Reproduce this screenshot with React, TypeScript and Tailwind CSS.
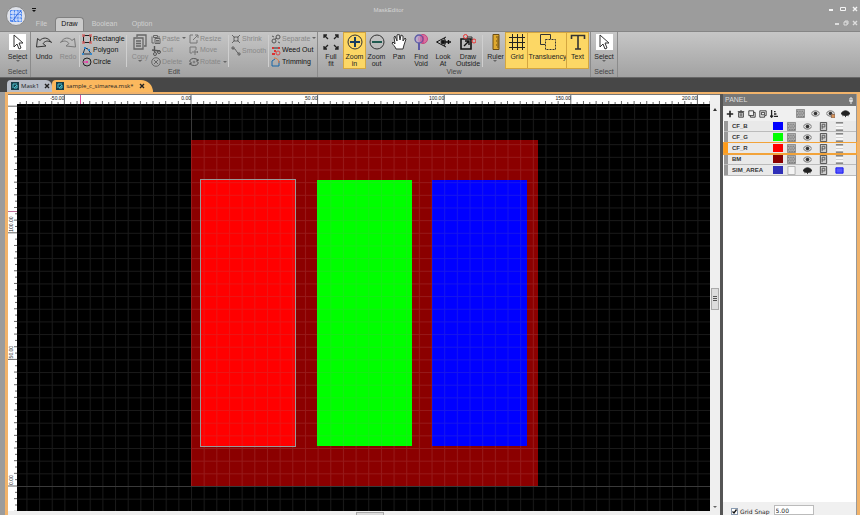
import React from "react";

const STEP = 12.66;

type IconProps = { children: React.ReactNode; box?: string; size?: string };

function Icon({ children, box = "0 0 16 16", size = "size-4" }: IconProps) {
  return (
    <svg viewBox={box} className={`${size} shrink-0`} fill="none" stroke="currentColor" strokeWidth="1" aria-hidden="true">
      {children}
    </svg>
  );
}

const arrowCursor = <path d="M4 1v12l3-3 2 5 2-1-2-5h4z" fill="#fff" stroke="#333" />;

const icons = {
  undo: <path d="M.5 13 1.5 4.5l2.5 2C7 3 12 3 15.5 8.5 12 6 9 7 7 9.5l3 2.5z" stroke="#333" />,
  redo: <path d="M15.5 13 14.5 4.5l-2.5 2C9 3 4 3 .5 8.5 4 6 7 7 9 9.5L6 12z" stroke="#777" />,
  copy: <path d="M5 3V1h9v11h-2M2 4h9v11H2zM4 7h5M4 9.5h5M4 12h5" stroke="#666" strokeWidth="1.3" />,
  rect: (
    <>
      <path d="M1.5 1.5h7v7h-7z" stroke="#222" />
      <path d="M0 0h3v3H0zM7 0h3v3H7zM0 7h3v3H0zM7 7h3v3H7z" fill="#d66" fillOpacity="0.7" stroke="none" />
    </>
  ),
  polygon: (
    <>
      <path d="M1 8 3 2l3 1 3 5z" stroke="#234" />
      <path d="M0 7h2v2H0zM2 1h2v2H2zM6 3h2v2H6zM8 7h2v2H8z" fill="#38c" stroke="none" />
    </>
  ),
  circle: (
    <>
      <circle cx="5" cy="5" r="4" stroke="#222" />
      <path d="M1 5h5" stroke="#e3a" />
      <circle cx="5" cy="5" r="1" fill="#e3a" stroke="none" />
    </>
  ),
  paste: <path d="M2.5 1.5h4v2h-4zM1 2.5v6.5h2M8 2v2M4 4.5h5v5H4zM5 6.5h3M5 8h3" stroke="#666" />,
  cut: (
    <>
      <path d="M3.5 0v6M1 4l8 1" stroke="#555" strokeWidth="1.4" />
      <circle cx="4" cy="8" r="1.5" stroke="#555" />
      <circle cx="8" cy="6" r="1.5" stroke="#555" />
    </>
  ),
  del: (
    <>
      <circle cx="5" cy="5" r="4.3" stroke="#666" />
      <path d="m3 3 4 4M7 3 3 7" stroke="#666" />
    </>
  ),
  resize: <path d="M4 1H1v8h7V6M4 6l5-5M6 1h3v3" stroke="#777" />,
  move: <path d="M1 7V1h6v3M1 7h2M3 6h6M6 4v5M8 5l1 1-1 1" stroke="#777" />,
  rotate: (
    <>
      <path d="M1 5a4 3 0 0 1 8-1M9 5a4 3 0 0 1-8 1M9 2v2H7M1 8V6h2" stroke="#555" />
      <circle cx="5" cy="5" r="1" fill="#555" />
    </>
  ),
  shrink: <path d="m1 1 3 3M2 4h2V2M9 1 6 4M6 2v2h2M1 9l3-3M2 6h2v2M9 9 6 6M8 6H6v2" stroke="#666" />,
  smooth: <path d="m1 2 3 1 2 3 3 3M1 1h2v2H1zM7 7h2v2H7z" stroke="#666" />,
  separate: (
    <>
      <circle cx="3" cy="7" r="2" stroke="#555" />
      <circle cx="7" cy="3" r="2" stroke="#555" />
      <path d="m1 2 2 1M7 8l2 1M4 5l2-1" stroke="#555" />
    </>
  ),
  weed: (
    <>
      <path d="M1 1h2v2H1zM1 7h3v2H1zM7 1h2v2H7zM3 4h2v2H3z" fill="#d33" stroke="none" />
      <circle cx="7" cy="7" r="2" stroke="#d44" />
      <path d="M3 2h4" stroke="#333" />
    </>
  ),
  trim: (
    <>
      <path d="M1 9V4l3-2M1 9h7V4" stroke="#1767a8" />
      <path d="M3 1c3 0 5 2 5 5" stroke="#d74" />
    </>
  ),
  fit: <path d="m1 1 4 4M1 4V1h3M15 1l-4 4M12 1h3v3M1 15l4-4M1 12v3h3M15 15l-4-4M15 12v3h-3" stroke="#222" strokeWidth="1.3" />,
  zoomIn: (
    <>
      <circle cx="8" cy="8" r="7" stroke="#333" />
      <path d="M3 8h10M8 3v10" stroke="#163a5f" strokeWidth="2" />
    </>
  ),
  zoomOut: (
    <>
      <circle cx="8" cy="8" r="7" stroke="#333" />
      <path d="M3 8h10" stroke="#205a50" strokeWidth="2" />
    </>
  ),
  pan: <path d="M5 15c-1-3-3-4-4-6l1-1 2 2-1-7 1-1 2 5V1l2-1 1 6 1-5 2 1v5l2-3 1 1-2 6-1 4z" fill="#fff" stroke="#333" />,
  find: (
    <>
      <circle cx="10" cy="5" r="4.5" fill="#d9709f" stroke="#c4467e" />
      <circle cx="6" cy="5" r="4" fill="#b9a4cf" fillOpacity="0.7" stroke="#5b5aa5" strokeWidth="1.3" />
      <path d="M6 9v7" stroke="#5b5aa5" strokeWidth="2" />
      <path d="M8 2v6M10 2v7" stroke="#c2186b" strokeOpacity="0.6" />
    </>
  ),
  look: (
    <>
      <path d="M11 3 1.5 8l9.5 5M9 4c2 3 2 5 0 8" stroke="#111" />
      <circle cx="8" cy="8" r="2" fill="#111" />
      <path d="M11 8h5M13.5 6v4" stroke="#111" strokeWidth="1.4" />
    </>
  ),
  outside: (
    <>
      <path d="M1 5h10v10H1z" stroke="#111" strokeWidth="1.6" />
      <path d="m4 12 5-5M5 7h4v4" stroke="#111" strokeWidth="1.4" />
      <circle cx="5.5" cy="2.5" r="2" stroke="#e33" />
      <circle cx="14" cy="7" r="2" stroke="#e33" />
      <path d="M7 3h5v3" stroke="#333" />
    </>
  ),
  ruler: <path d="M5 .5h6v15H5zM8 3h3M9 5h2M8 7h3M9 9h2M8 11h3M9 13h2" fill="#e0a92e" stroke="#6b4d13" />,
  grid: <path d="M0 3.5h16M0 8.5h16M0 13.5h16M3.5 0v16M8.5 0v16M13.5 0v16" stroke="#222" />,
  trans: (
    <>
      <path d="M5 10.5H.5V.5h10V5" stroke="#333" />
      <path d="M5.5 5.5h10v10h-10z" stroke="#333" strokeDasharray="2 1" />
    </>
  ),
  text: <path d="M1.5 5V1.5h13V5M8 2v13M5 15h6" stroke="#333" strokeWidth="1.6" />,
};

const buttonBase = "flex shrink-0 flex-col items-center whitespace-nowrap text-[7px] leading-[7px]";

type BigProps = {
  icon: React.ReactNode;
  lines: string[];
  width: string;
  active?: boolean;
  disabled?: boolean;
  menu?: boolean;
};

function BigButton({ icon, lines, width, active, disabled, menu }: BigProps) {
  return (
    <button
      type="button"
      disabled={disabled}
      className={`${buttonBase} ${width} gap-[3px] pt-px ${active ? "bg-[#fcd765] outline outline-[#d4a640]" : ""} ${disabled ? "text-[#888]" : "text-[#222]"}`}
    >
      <Icon>{icon}</Icon>
      <span className="flex flex-col items-center">
        {lines.map((line) => (
          <span key={line}>{line}</span>
        ))}
        {menu && <Caret />}
      </span>
    </button>
  );
}

function Caret() {
  return (
    <svg viewBox="0 0 4 3" className="h-[3px] w-1 shrink-0" aria-hidden="true">
      <path d="M0 0h4L2 2z" fill="#666" />
    </svg>
  );
}

function SelectButton() {
  return (
    <button type="button" className={`${buttonBase} w-full gap-[3px] pt-px text-[#222]`}>
      <span className="flex h-4 w-[17px] items-center justify-center bg-white">
        <Icon>{arrowCursor}</Icon>
      </span>
      <span className="flex flex-col items-center">
        Select
        <Caret />
      </span>
    </button>
  );
}

type SmallItem = { icon: React.ReactNode; label: string; off?: boolean; menu?: boolean };

function SmallColumn({ items, width }: { items: SmallItem[]; width: string }) {
  return (
    <div className={`${width} flex shrink-0 flex-col`}>
      {items.map((item) => (
        <button
          key={item.label}
          type="button"
          disabled={item.off}
          className={`flex h-3 items-center gap-px whitespace-nowrap text-[7px] ${item.off ? "text-[#888]" : "text-[#111]"}`}
        >
          <Icon box="0 0 10 10" size="size-[10px]">{item.icon}</Icon>
          {item.label}
          {item.menu && <span className="ml-px"><Caret /></span>}
        </button>
      ))}
    </div>
  );
}

function Divider() {
  return <div className="mr-[2px] h-8 w-px shrink-0 self-center bg-[#cfcfcf]" />;
}

function Group({ label, width, children }: { label: string; width: string; children: React.ReactNode }) {
  return (
    <section className={`${width} flex shrink-0 flex-col border-r border-[#8b8b8b]`}>
      <div className="flex h-9 pt-px">{children}</div>
      <h2 className="text-center text-[7px] leading-[8px] text-[#444]">{label}</h2>
    </section>
  );
}

function Ribbon() {
  return (
    <div className="flex h-[46px] shrink-0 overflow-hidden border-t border-[#858585] bg-linear-to-b from-[#c6c6c6] to-[#a2a2a2] pl-[5px]">
      <Group label="Select" width="w-[26px]">
        <SelectButton />
      </Group>
      <Group label="Edit" width="w-[287px]">
        <BigButton icon={icons.undo} lines={["Undo"]} width="w-[26px]" />
        <BigButton icon={icons.redo} lines={["Redo"]} width="w-[22px]" disabled />
        <Divider />
        <SmallColumn
          width="w-[44px]"
          items={[
            { icon: icons.rect, label: "Rectangle" },
            { icon: icons.polygon, label: "Polygon" },
            { icon: icons.circle, label: "Circle" },
          ]}
        />
        <Divider />
        <BigButton icon={icons.copy} lines={["Copy"]} width="w-[22px]" disabled menu />
        <SmallColumn
          width="w-[38px]"
          items={[
            { icon: icons.paste, label: "Paste", off: true, menu: true },
            { icon: icons.cut, label: "Cut", off: true },
            { icon: icons.del, label: "Delete", off: true },
          ]}
        />
        <SmallColumn
          width="w-[39px]"
          items={[
            { icon: icons.resize, label: "Resize", off: true },
            { icon: icons.move, label: "Move", off: true },
            { icon: icons.rotate, label: "Rotate", off: true, menu: true },
          ]}
        />
        <Divider />
        <SmallColumn
          width="w-[37px]"
          items={[
            { icon: icons.shrink, label: "Shrink", off: true },
            { icon: icons.smooth, label: "Smooth", off: true },
          ]}
        />
        <Divider />
        <SmallColumn
          width="w-[45px]"
          items={[
            { icon: icons.separate, label: "Separate", off: true, menu: true },
            { icon: icons.weed, label: "Weed Out" },
            { icon: icons.trim, label: "Trimming" },
          ]}
        />
      </Group>
      <Group label="View" width="w-[273px]">
        <BigButton icon={icons.fit} lines={["Full", "fit"]} width="w-[26px]" />
        <BigButton icon={icons.zoomIn} lines={["Zoom", "in"]} width="w-[21px]" active />
        <BigButton icon={icons.zoomOut} lines={["Zoom", "out"]} width="w-[23px]" />
        <BigButton icon={icons.pan} lines={["Pan"]} width="w-[22px]" />
        <BigButton icon={icons.find} lines={["Find", "Void"]} width="w-[22px]" />
        <BigButton icon={icons.look} lines={["Look", "At"]} width="w-[22px]" />
        <BigButton icon={icons.outside} lines={["Draw", "Outside"]} width="w-[28px]" />
        <Divider />
        <BigButton icon={icons.ruler} lines={["Ruler"]} width="w-[21px]" menu />
        <BigButton icon={icons.grid} lines={["Grid"]} width="w-[22px]" active />
        <BigButton icon={icons.trans} lines={["Transluency"]} width="w-[39px]" active />
        <BigButton icon={icons.text} lines={["Text"]} width="w-[21px]" active />
      </Group>
      <Group label="Select" width="w-[27px]">
        <SelectButton />
      </Group>
    </div>
  );
}

function WindowButtons({ dim }: { dim?: boolean }) {
  const tone = dim ? "gap-[3px] text-[#ddd]" : "gap-[6px] text-[#f4f4f4]";
  return (
    <div className={`flex ${tone}`}>
      <button type="button" aria-label="Minimize">
        <Icon box="0 0 6 6" size="size-[6px]"><path d="M1 4h4" strokeWidth="2" /></Icon>
      </button>
      <button type="button" aria-label="Restore">
        <Icon box="0 0 6 6" size="size-[6px]">
          <path d={dim ? "M2 2V1h3v3H4M1 2h3v3H1z" : "M.5 1.5h5v3h-5z"} />
        </Icon>
      </button>
      <button type="button" aria-label="Close">
        <Icon box="0 0 6 6" size="size-[6px]"><path d="m1 1 4 4M5 1 1 5" strokeWidth="1.4" /></Icon>
      </button>
    </div>
  );
}

function Header() {
  return (
    <header className="flex h-[31px] shrink-0 bg-[#9c9c9c] pl-[6px]">
      <button type="button" aria-label="Menu" className="mt-[6px] flex size-5 items-center justify-center rounded-full border border-[#8a8a8a] bg-[#dfe2ea]">
        <Icon box="0 0 12 12" size="size-3">
          <path d="M0 0h12v12H0z" fill="#c3d6fb" stroke="none" />
          <path d="M.5.5h11v11H.5zM.5 4.5h11M.5 8h11M4.5.5v11M8 .5v11" stroke="#4a86f0" strokeDasharray="2 1" />
          <path d="M1 11c4 0 4-6 10-10" stroke="#2a62dd" />
        </Icon>
      </button>
      <div className="flex flex-1 flex-col justify-between">
        <div className="flex h-[17px] items-center pt-[3px]">
          <svg viewBox="0 0 6 5" className="ml-[5px] h-[5px] w-[6px]" aria-hidden="true">
            <path d="M1 0h4v1H1zM1 2h4L3 4z" fill="#111" />
          </svg>
          <h1 className="flex-1 pr-22 text-center text-[6px] text-[#d4d4d4]">MaskEditor</h1>
        </div>
        <nav className="flex h-[14px] items-center text-[7px] text-[#d0d0d0]">
          <button type="button" className="w-[29px] pl-[2px]">File</button>
          <button type="button" className="h-full w-[29px] rounded-t-sm border border-b-0 border-[#808080] bg-[#cbcbcb] text-[#111]">Draw</button>
          <button type="button" className="w-[41px]">Boolean</button>
          <button type="button" className="w-[34px]">Option</button>
        </nav>
      </div>
      <div className="flex flex-col items-end gap-2 pt-[6px] pr-[2px]">
        <WindowButtons />
        <WindowButtons dim />
      </div>
    </header>
  );
}

function FileTab({ name, active }: { name: string; active?: boolean }) {
  return (
    <button
      type="button"
      className={`flex h-3 items-center gap-[2px] rounded-tl-sm pl-1 font-['Open_Sans',sans-serif] text-[6px] text-[#222] ${active ? "rounded-tr-xl bg-[#fbb85e] pr-2" : "rounded-tr-md bg-[#b9bec8] pr-[2px]"}`}
    >
      <Icon box="0 0 8 8" size="size-2">
        <path d="M0 0h8v8H0z" fill="#153e4a" stroke="none" />
        <path d="M2 6V2h4M3 6l3-3v3z" stroke="#4fc0cf" />
      </Icon>
      {name}
      <span className="ml-[3px]">
        <Icon box="0 0 6 6" size="size-[6px]"><path d="m1 1 4 4M5 1 1 5" stroke="#222" strokeWidth="1.4" /></Icon>
      </span>
    </button>
  );
}

const ticks = Array.from({ length: 130 }, (_, i) => i - 40);

function TopRuler() {
  return (
    <svg className="h-full min-w-0 flex-1 bg-white" aria-label="Horizontal ruler">
      {ticks.map((i) => {
        const x = 174 + (i * STEP) / 2;
        const height = i % 20 === 0 ? 9 : i % 2 === 0 ? 3 : 2;
        return <path key={i} d={`M${x} ${9 - height}V9`} stroke="#666" />;
      })}
      {[-50, 0, 50, 100, 150, 200].map((v) => (
        <text key={v} x={174 + (v / 5) * STEP} y="5" fontSize="5" textAnchor="end" fill="#111">{v.toFixed(2)}</text>
      ))}
      <path d="M63.5 0V9" stroke="#e0509a" />
    </svg>
  );
}

function SideRuler() {
  return (
    <svg className="h-full w-[9px] shrink-0 bg-white" aria-label="Vertical ruler">
      {ticks.map((i) => {
        const y = 382 - (i * STEP) / 2;
        const width = i % 20 === 0 ? 9 : i % 2 === 0 ? 3 : 2;
        return <path key={i} d={`M${9 - width} ${y}H9`} stroke="#666" />;
      })}
      {[0, 50, 100].map((v) => (
        <text key={v} transform={`translate(5 ${381 - (v / 5) * STEP}) rotate(-90)`} fontSize="5" fill="#111">{v.toFixed(2)}</text>
      ))}
      <path d="M0 107.5H9" stroke="#c0709a" />
    </svg>
  );
}

const bars = [
  { x: 184, color: "#f00" },
  { x: 300, color: "#0f0" },
  { x: 415, color: "#00f" },
];

function Canvas() {
  return (
    <svg className="h-full min-w-0 flex-1 bg-black" aria-label="Mask drawing">
      <defs>
        <pattern id="mesh" x="174" y="382" width={STEP} height={STEP} patternUnits="userSpaceOnUse">
          <path d={`M.5 0V${STEP}M0 .5H${STEP}`} stroke="#fff" strokeOpacity="0.1" />
        </pattern>
        <pattern id="soft-mesh" x="174" y="382" width={STEP} height={STEP} patternUnits="userSpaceOnUse">
          <path d={`M.5 0V${STEP}M0 .5H${STEP}`} stroke="#888" strokeOpacity="0.16" />
        </pattern>
      </defs>
      <rect x="174" y="36" width="347" height="346" fill="#8b0000" />
      <rect width="100%" height="100%" fill="url(#mesh)" />
      {bars.map((bar) => (
        <g key={bar.x}>
          <rect x={bar.x} y="76" width="95" height="266" fill={bar.color} />
          <rect x={bar.x} y="76" width="95" height="266" fill="url(#soft-mesh)" />
        </g>
      ))}
      <rect x="183.5" y="75.5" width="95" height="267" fill="none" stroke="#999" />
      <path d="M174.5 0V36M0 382.5H2000" stroke="#3a3a3a" />
    </svg>
  );
}

const hatch = (
  <>
    <path d="M.5.5h9v9h-9z" fill="#b4b4b4" stroke="#888" />
    <path d="M1 2.5h8M2 4.5h7M1 6.5h8M2 8.5h7" stroke="#555" strokeDasharray="1 1" />
  </>
);
const eye = (
  <>
    <path d="M0 5c3-4 7-4 10 0-3 4-7 4-10 0z" fill="#ddd" stroke="#666" />
    <circle cx="5" cy="5" r="2" fill="#333" stroke="none" />
  </>
);
const lock = (
  <>
    {eye}
    <path d="M6 6h4v4H6z" fill="#d99559" stroke="#865" />
  </>
);
const closedEye = <path d="M0 5c3-4 7-4 10 0-3 3-7 3-10 0zM2 7v1M5 7v2M8 7v1" fill="#222" stroke="#222" />;
const tag = (
  <>
    <path d="M1.5.5h7v9h-7z" fill="#ccc" stroke="#444" />
    <path d="M3.5 2.5h3v3h-3zM3.5 5v3" stroke="#555" />
  </>
);
const lines = (
  <>
    <path d="M1 1h8v8H1z" fill="#f6f6f6" stroke="none" />
    <path d="M1 1h8M1 9h8" stroke="#333" />
    <path d="M1 5h8" stroke="#ccc" />
  </>
);

const layers = [
  { name: "CF_B", color: "bg-[#0000ff]" },
  { name: "CF_G", color: "bg-[#00ff00]" },
  { name: "CF_R", color: "bg-[#ff0000]", active: true },
  { name: "BM", color: "bg-[#8b0000]" },
  { name: "SIM_AREA", color: "bg-[#3030b8]", hidden: true },
];

function ToolIcon({ label, children, size = "size-2" }: { label: string; children: React.ReactNode; size?: string }) {
  return (
    <button type="button" aria-label={label}>
      <Icon box="0 0 10 10" size={size}>{children}</Icon>
    </button>
  );
}

function Panel() {
  return (
    <aside className="flex w-[134px] shrink-0 flex-col border-r border-[#999] bg-white">
      <div className="flex h-3 shrink-0 items-center justify-between bg-[#777] px-[2px] pt-px text-[7px] text-[#ddd]">
        <h2>PANEL</h2>
        <Icon box="0 0 6 8" size="h-2 w-[6px]"><path d="M2 1h2v3H2zM1 4h4M3 4v3" stroke="#eee" /></Icon>
      </div>
      <div className="flex h-[15px] shrink-0 items-center justify-between bg-[#f0f0f0] pr-[6px] pl-[3px] text-[#222]">
        <div className="flex gap-[3px]">
          <ToolIcon label="Add"><path d="M5 1v8M1 5h8" strokeWidth="2" /></ToolIcon>
          <ToolIcon label="Delete"><path d="M2 3h6v6H2zM1 2h8M4 1h2M4 4v4M6 4v4" /></ToolIcon>
          <ToolIcon label="Duplicate"><path d="M1 1h6v6H1zM3 7v2h6V3H7" /></ToolIcon>
          <ToolIcon label="Merge"><path d="M1 1h8v6H7v2H1zM3 3h4v3H3z" /></ToolIcon>
          <ToolIcon label="Sort"><path d="M2 0v9M0 7l2 2 2-2M5 2h2M5 5h3M5 8h5" strokeWidth="1.6" /></ToolIcon>
        </div>
        <div className="flex gap-[6px]">
          <ToolIcon label="Pattern" size="size-[9px]">{hatch}</ToolIcon>
          <ToolIcon label="Show" size="size-[9px]">{eye}</ToolIcon>
          <ToolIcon label="Lock" size="size-[9px]">{lock}</ToolIcon>
          <ToolIcon label="Hide" size="size-[9px]">{closedEye}</ToolIcon>
        </div>
      </div>
      <ul className="flex-1 pl-px">
        {layers.map((layer) => (
          <li
            key={layer.name}
            className={`flex h-[11px] items-center border-b bg-[#e9e9e9] text-[6px] font-bold text-[#333] ${layer.active ? "relative border-[#f2a33a] outline outline-[#f2a33a]" : "border-[#bbb]"}`}
          >
            <span className={`h-full w-1 ${layer.active ? "bg-[#ff9c1a]" : "bg-[#999]"}`} />
            <span className="flex-1 pt-px pl-1">{layer.name}</span>
            <span className={`h-2 w-[10px] ${layer.color}`} />
            <span className="flex gap-[7px] pr-3 pl-1">
              <Icon box="0 0 10 10" size="size-[9px]">
                {layer.hidden ? <path d="M1 .5h8v9H1z" fill="#f4f4f4" stroke="#aaa" /> : hatch}
              </Icon>
              <Icon box="0 0 10 10" size="size-[9px]">{layer.hidden ? closedEye : eye}</Icon>
              <Icon box="0 0 10 10" size="size-[9px]">{tag}</Icon>
              <Icon box="0 0 10 10" size="size-[9px]">
                {layer.hidden ? <path d="M1 2h8v6H1z" fill="#55f" stroke="#11e" /> : lines}
              </Icon>
            </span>
          </li>
        ))}
      </ul>
      <div className="flex h-[13px] shrink-0 items-start gap-1 bg-[#f0f0f0] pl-2 font-['DejaVu_Sans',sans-serif] text-[6px] text-[#222]">
        <label className="flex items-center gap-[2px] pt-[6px] leading-[7px]">
          <span className="grid">
            <input type="checkbox" defaultChecked className="peer col-start-1 row-start-1 size-[7px] appearance-none border border-[#8a9bb0] bg-white" />
            <svg viewBox="0 0 7 7" className="pointer-events-none invisible col-start-1 row-start-1 size-[7px] peer-checked:visible" aria-hidden="true">
              <path d="M1.5 3.5 3 5l2.5-3.5" fill="none" stroke="#111" strokeWidth="1.3" />
            </svg>
          </span>
          Grid Snap
        </label>
        <input aria-label="Grid snap size" defaultValue="5.00" className="mt-[3px] h-[10px] w-10 border border-[#bbb] bg-white px-px" />
      </div>
    </aside>
  );
}

export default function App() {
  return (
    <div className="flex h-screen flex-col overflow-hidden bg-[#9c9c9c] font-['Liberation_Sans',sans-serif]">
      <Header />
      <Ribbon />
      <div className="flex h-[15px] shrink-0 items-end border-t border-[#666] bg-[#474747] pl-[7px]">
        <FileTab name="Mask1" />
        <FileTab name="sample_c_simarea.msk*" active />
      </div>
      <main className="ml-[5px] flex min-h-0 flex-1 border-x-[3px] border-t-2 border-[#f1b36b] bg-[#555]">
        <div className="flex min-w-0 flex-1 flex-col">
          <div className="flex h-[10px] shrink-0 border-t border-[#777] bg-white pl-[9px]">
            <TopRuler />
            <div className="w-[10px] shrink-0 bg-[#f0f0f0]" />
          </div>
          <div className="flex min-h-0 flex-1">
            <SideRuler />
            <Canvas />
            <div className="flex w-[10px] shrink-0 flex-col items-center justify-between bg-[#efefef] pt-1 pb-[2px]">
              <svg viewBox="0 0 4 3" className="h-[3px] w-1" aria-hidden="true"><path d="M0 3h4L2 0z" fill="#333" /></svg>
              <div className="mb-5 flex h-[22px] w-2 items-center justify-center border border-[#aaa] bg-[#ddd]">
                <Icon box="0 0 4 5" size="h-[5px] w-1"><path d="M0 .5h4M0 2.5h4M0 4.5h4" stroke="#555" /></Icon>
              </div>
              <Caret />
            </div>
          </div>
          <div className="flex h-1 shrink-0 justify-center bg-[#efefef] pl-3">
            <div className="mt-px h-[3px] w-7 border border-b-0 border-[#aaa] bg-[#ddd]" />
          </div>
        </div>
        <div className="w-[3px] shrink-0 bg-[#555]" />
        <Panel />
      </main>
    </div>
  );
}
